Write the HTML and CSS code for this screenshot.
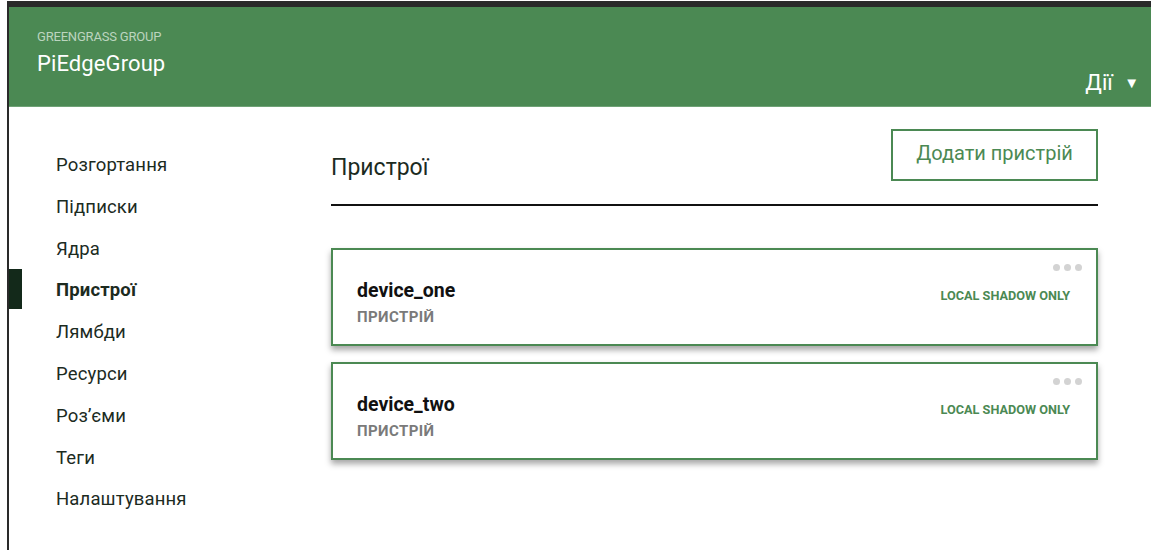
FILE: index.html
```html
<!DOCTYPE html>
<html lang="uk">
<head>
<meta charset="utf-8">
<title>PiEdgeGroup — Пристрої</title>
<link rel="stylesheet" href="styles.css">
</head>
<body>
<div class="frame">
  <header class="topbar">
    <div class="group-info">
      <div class="group-kicker">GREENGRASS GROUP</div>
      <div class="group-name">PiEdgeGroup</div>
    </div>
    <div class="actions">Дії <span class="caret">▼</span></div>
  </header>
  <div class="body">
    <nav class="sidebar">
      <a class="nav-item">Розгортання</a>
      <a class="nav-item">Підписки</a>
      <a class="nav-item">Ядра</a>
      <a class="nav-item active">Пристрої</a>
      <a class="nav-item">Лямбди</a>
      <a class="nav-item">Ресурси</a>
      <a class="nav-item">Роз’єми</a>
      <a class="nav-item">Теги</a>
      <a class="nav-item">Налаштування</a>
    </nav>
    <main class="content">
      <div class="content-head">
        <h1 class="title">Пристрої</h1>
        <button class="add-btn">Додати пристрій</button>
      </div>
      <div class="cards">
        <div class="card">
          <div class="card-info">
            <div class="card-name">device_one</div>
            <div class="card-type">ПРИСТРІЙ</div>
          </div>
          <div class="card-status">LOCAL SHADOW ONLY</div>
          <div class="menu-dots"><i></i><i></i><i></i></div>
        </div>
        <div class="card">
          <div class="card-info">
            <div class="card-name">device_two</div>
            <div class="card-type">ПРИСТРІЙ</div>
          </div>
          <div class="card-status">LOCAL SHADOW ONLY</div>
          <div class="menu-dots"><i></i><i></i><i></i></div>
        </div>
      </div>
    </main>
  </div>
</div>
</body>
</html>
```

FILE: styles.css
```css
* { box-sizing: border-box; }

html, body {
  margin: 0;
  height: 100%;
  background: #fff;
  font-family: Roboto, "Noto Sans", "Liberation Sans", sans-serif;
  overflow: hidden;
}

.frame {
  margin: 1px 0 0 7px;
  height: calc(100% - 1px);
  border-top: 6px solid #2a2a2a;
  border-left: 2px solid #2a2a2a;
  display: flex;
  flex-direction: column;
}

.topbar {
  height: 100px;
  background: #4b8953;
  border-bottom: 1px solid #6fa276;
  display: flex;
  justify-content: space-between;
  align-items: flex-end;
  padding: 0 12px 11px 28px;
  color: #fff;
}

.group-info {
  align-self: flex-start;
  padding-top: 22px;
}

.group-kicker {
  font-size: 13px;
  color: #bcd5bf;
  letter-spacing: -0.2px;
}

.group-name {
  font-size: 22px;
  margin-top: 7px;
  letter-spacing: 0.1px;
}

.actions {
  font-size: 22px;
}

.caret {
  font-size: 15px;
  margin-left: 6px;
  position: relative;
  top: -2px;
}

.body {
  display: flex;
  flex: 1;
}

.sidebar {
  width: 322px;
  display: flex;
  flex-direction: column;
  padding-top: 38px;
}

.nav-item {
  position: relative;
  display: block;
  height: 41.8px;
  line-height: 41.8px;
  padding-left: 47px;
  font-size: 18.5px;
  letter-spacing: 0.15px;
  color: #1c2b1f;
}

.nav-item.active {
  font-weight: 700;
}

.nav-item.active::before {
  content: "";
  position: absolute;
  left: 0;
  top: -1px;
  width: 13px;
  height: 40px;
  background: #13291a;
}

.content {
  width: 767px;
  padding-top: 22px;
}

.content-head {
  display: flex;
  justify-content: space-between;
  align-items: flex-start;
  border-bottom: 2px solid #111;
  height: 77px;
}

.title {
  margin: 25px 0 0;
  font-size: 23px;
  font-weight: 400;
  color: #1c2b1f;
}

.add-btn {
  width: 207px;
  height: 52px;
  background: #fff;
  border: 2px solid #4b8953;
  color: #4b8953;
  font-family: inherit;
  font-size: 20px;
  padding: 0 0 4px;
}

.cards {
  margin-top: 42px;
  display: flex;
  flex-direction: column;
  gap: 16px;
}

.card {
  position: relative;
  height: 98px;
  border: 2px solid #4b8953;
  box-shadow: 0 4px 6px rgba(0, 0, 0, 0.35);
  display: flex;
  align-items: center;
  justify-content: space-between;
  padding: 0 26px 0 24px;
}

.card-info {
  margin-top: 10px;
}

.card-name {
  font-size: 19.5px;
  font-weight: 700;
  color: #111;
}

.card-type {
  margin-top: 6px;
  font-size: 15px;
  font-weight: 700;
  color: #7a7a7a;
  letter-spacing: 0.4px;
}

.card-status {
  margin-top: -4px;
  font-size: 12.7px;
  font-weight: 700;
  color: #4b8953;
}

.menu-dots {
  position: absolute;
  top: 14px;
  right: 14px;
  display: flex;
  gap: 4px;
}

.menu-dots i {
  width: 7px;
  height: 7px;
  border-radius: 50%;
  background: #d3d3d3;
}
```
